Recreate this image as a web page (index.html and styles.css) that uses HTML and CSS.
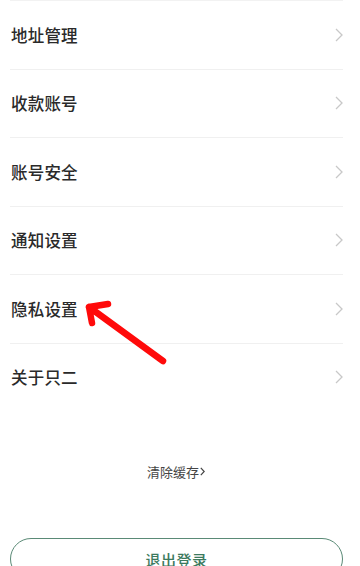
FILE: index.html
```html
<!DOCTYPE html>
<html lang="zh">
<head>
<meta charset="utf-8">
<link rel="stylesheet" href="styles.css">
</head>
<body>
<div class="page">
  <ul class="menu">
    <li class="item"><span class="label">地址管理</span><svg class="chev" viewBox="0 0 8 14"><path d="M1 1 L7 7 L1 13" /></svg></li>
    <li class="item"><span class="label">收款账号</span><svg class="chev" viewBox="0 0 8 14"><path d="M1 1 L7 7 L1 13" /></svg></li>
    <li class="item"><span class="label">账号安全</span><svg class="chev" viewBox="0 0 8 14"><path d="M1 1 L7 7 L1 13" /></svg></li>
    <li class="item"><span class="label">通知设置</span><svg class="chev" viewBox="0 0 8 14"><path d="M1 1 L7 7 L1 13" /></svg></li>
    <li class="item"><span class="label">隐私设置</span><svg class="chev" viewBox="0 0 8 14"><path d="M1 1 L7 7 L1 13" /></svg></li>
    <li class="item last"><span class="label">关于只二</span><svg class="chev" viewBox="0 0 8 14"><path d="M1 1 L7 7 L1 13" /></svg></li>
  </ul>
  <div class="cache">清除缓存<svg class="cache-chev" viewBox="0 0 5 9"><path d="M0.8 0.8 L4.2 4.5 L0.8 8.2" /></svg></div>
  <div class="logout">退出登录</div>
  <svg class="arrow" viewBox="0 0 360 566" width="360" height="566">
    <path d="M163 361 L89 307 M108 304 L89 307 L92 323" />
  </svg>
</div>
</body>
</html>
```
FILE: styles.css
```css
html, body {
  margin: 0;
  padding: 0;
  background: #ffffff;
}
body {
  font-family: "Noto Sans CJK SC", "Noto Sans", sans-serif;
  color: #333333;
}
.page {
  position: relative;
  width: 360px;
  height: 566px;
  overflow: hidden;
}
.menu {
  list-style: none;
  margin: 0 0 0 10px;
  padding: 0;
  width: 333px;
  border-top: 1px solid #f2f2f2;
}
.item {
  display: flex;
  align-items: center;
  justify-content: space-between;
  height: 67.5px;
  border-bottom: 1px solid #f0f0f0;
  padding-left: 1px;
}
.item.last {
  border-bottom: none;
}
.label {
  font-size: 16.5px;
  font-weight: 500;
  color: #2a2a2a;
  letter-spacing: 0.2px;
}
.chev {
  width: 8px;
  height: 14px;
  fill: none;
  stroke: #c8c8c8;
  stroke-width: 1.3;
}
.cache {
  margin-top: 51px;
  display: flex;
  align-items: center;
  justify-content: center;
  gap: 1px;
  padding-right: 8px;
  font-size: 13px;
  color: #444444;
}
.cache-chev {
  width: 5px;
  height: 9px;
  fill: none;
  stroke: #444444;
  stroke-width: 1.2;
}
.logout {
  margin: 57px 0 0 10px;
  width: 331px;
  height: 40px;
  border: 1.5px solid #5a8a76;
  border-radius: 22px;
  display: flex;
  align-items: center;
  justify-content: center;
  font-size: 15px;
  font-weight: 500;
  color: #3c7a5e;
  letter-spacing: 0.5px;
}
.arrow {
  position: absolute;
  left: 0;
  top: 0;
  pointer-events: none;
}
.arrow path {
  fill: none;
  stroke: #ff0a0a;
  stroke-width: 6.5;
  stroke-linecap: round;
  stroke-linejoin: round;
}
```
